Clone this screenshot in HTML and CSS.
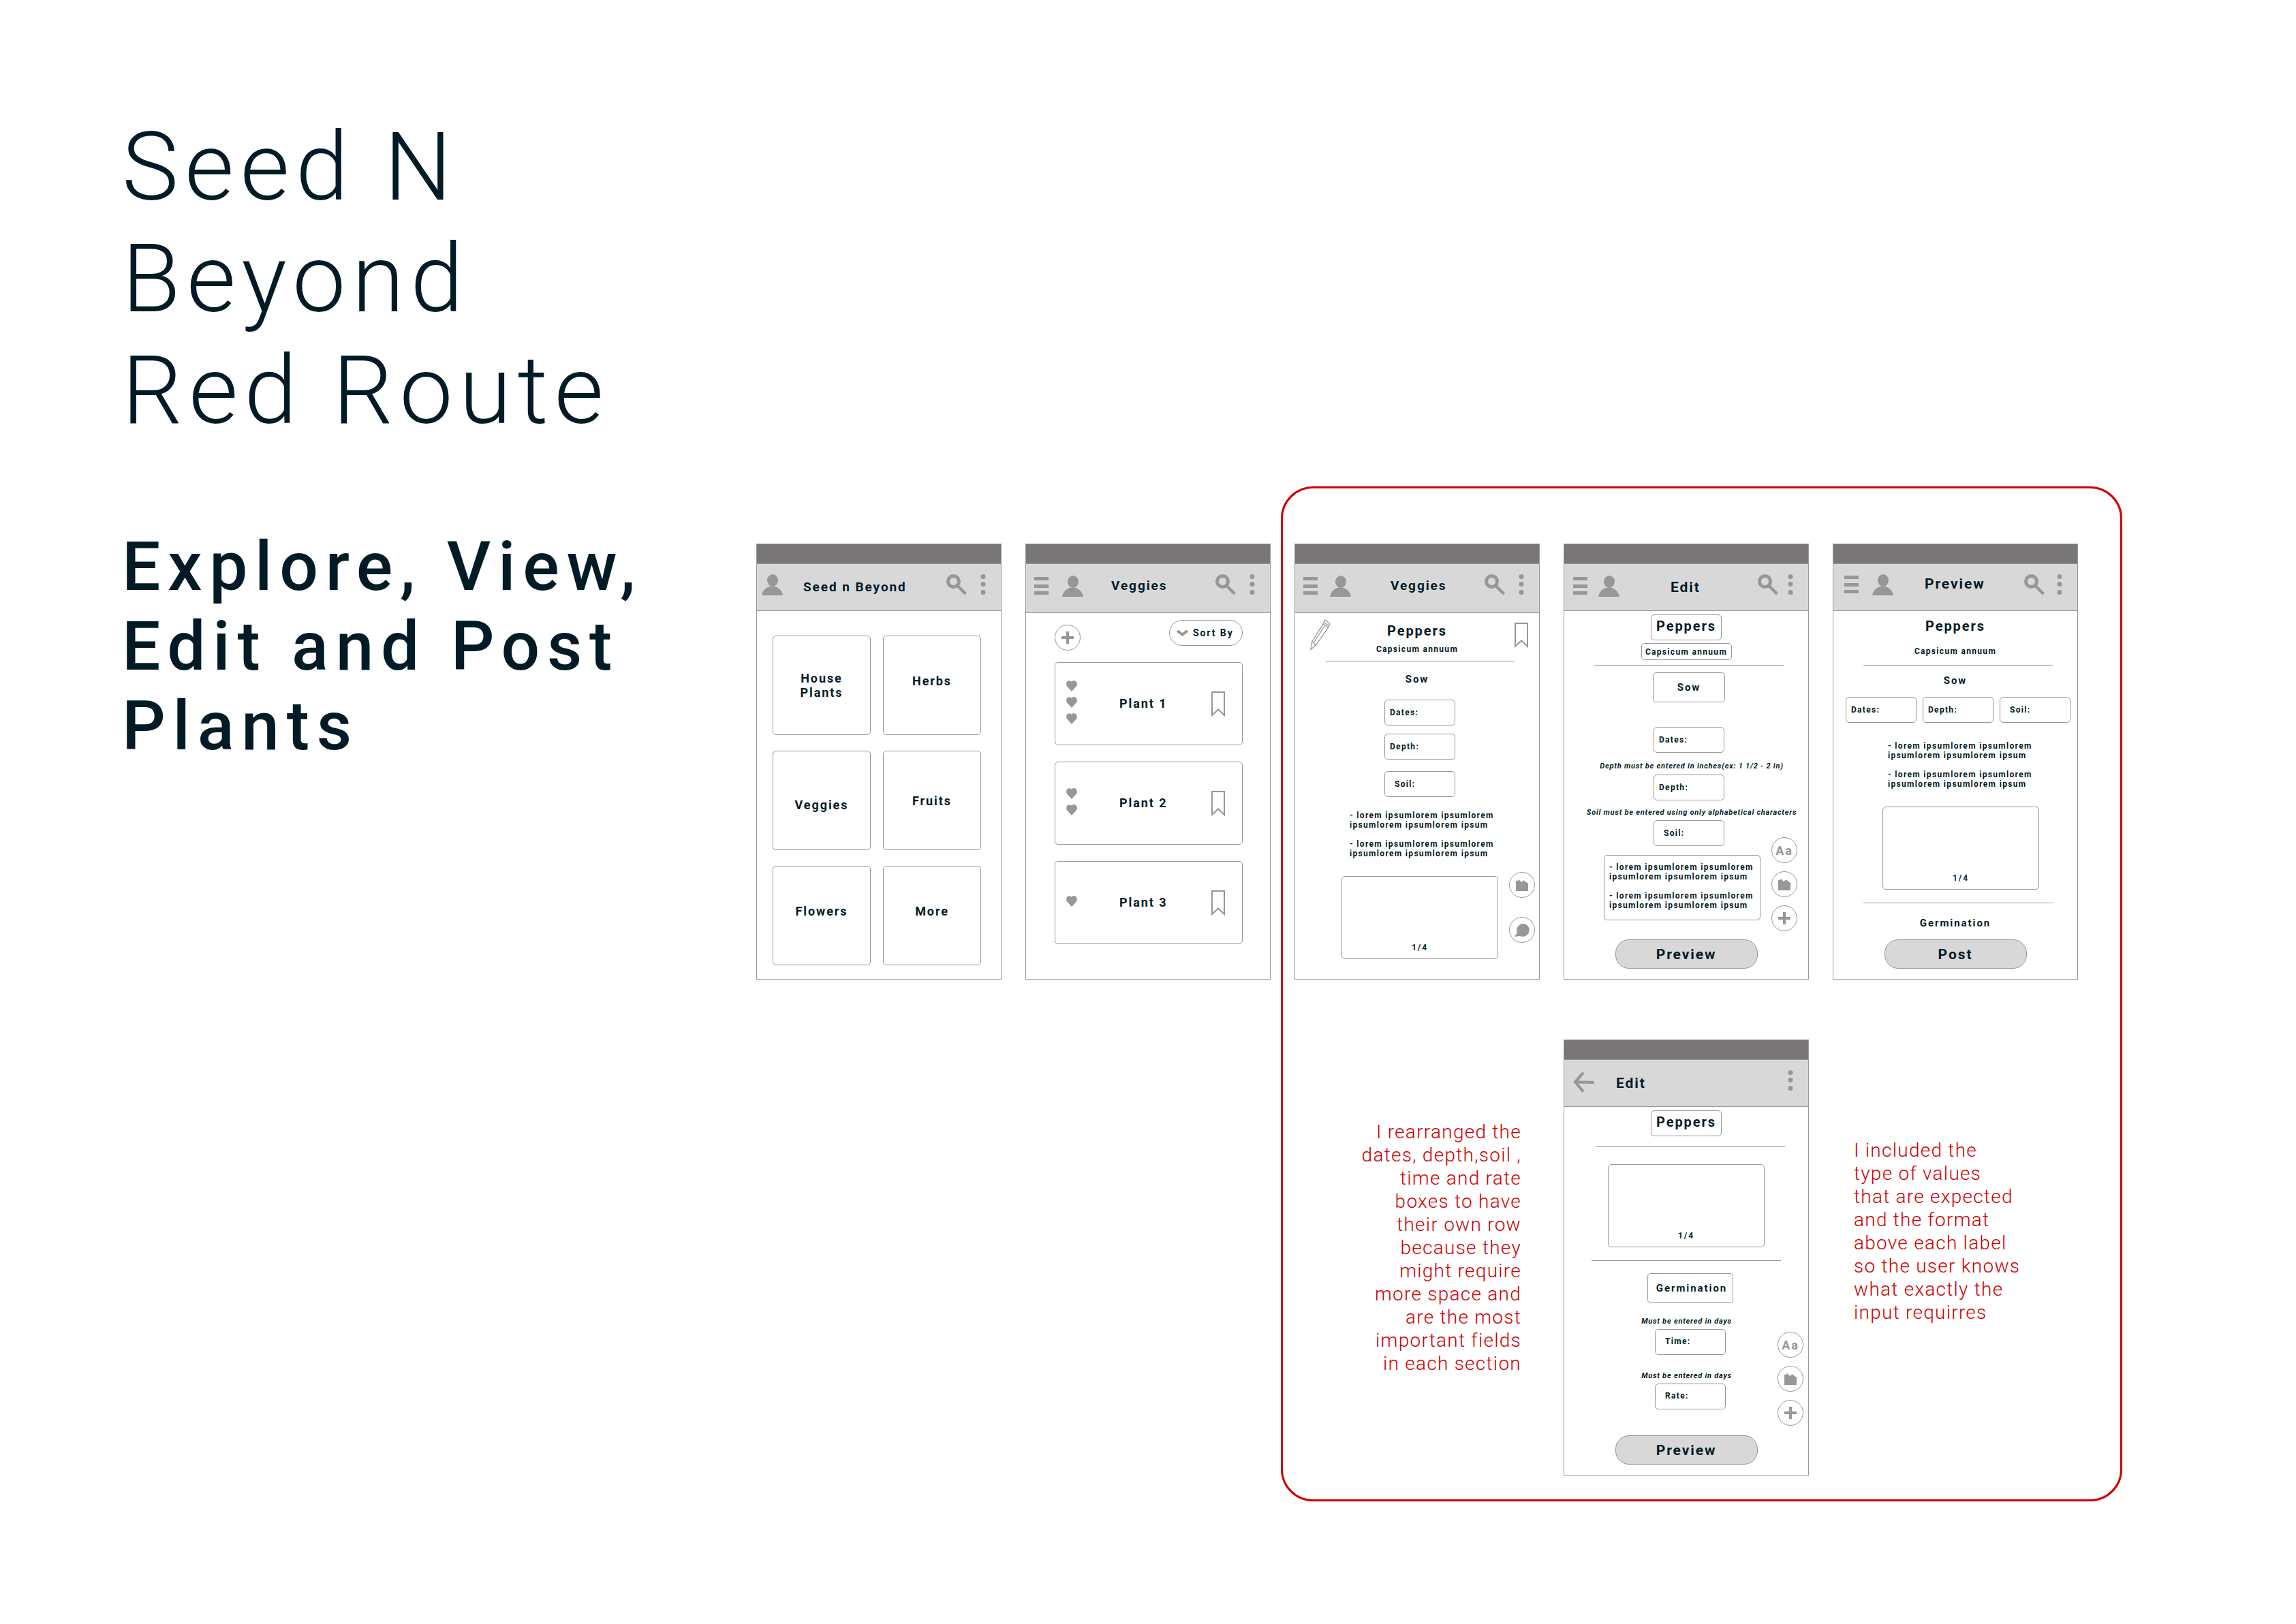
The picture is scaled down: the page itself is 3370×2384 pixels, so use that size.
FILE: index.html
```
<!DOCTYPE html>
<html lang="en">
<head>
<meta charset="utf-8">
<title>Seed N Beyond Red Route</title>
<link rel="stylesheet" href="styles.css">
</head>
<body>
<svg class="sprite" aria-hidden="true">
  <symbol id="user" viewBox="0 0 31 31"><ellipse cx="16" cy="9" rx="8" ry="9"/><path d="M0 31C1 25 6 17.5 15.500 17.500S30 25 31 31z"/></symbol>
  <symbol id="menu" viewBox="0 0 21 31"><path d="M0 2h21v5H0zM0 13h21v5H0zM0 23h21v5H0z"/></symbol>
  <symbol id="search" viewBox="0 0 31 31"><circle cx="10.500" cy="10.500" r="8" fill="none" stroke="currentColor" stroke-width="5"/><path d="M16.500 17L28.500 29" stroke="currentColor" stroke-width="4.500"/></symbol>
  <symbol id="more" viewBox="0 0 8 31"><circle cx="4" cy="3.500" r="3.500"/><circle cx="4" cy="14.500" r="3.500"/><circle cx="4" cy="26.500" r="3.500"/></symbol>
  <symbol id="back" viewBox="0 0 31 31"><path d="M15 1.500L3 15.300L15 29.500M3 15.300L31 16" fill="none" stroke="currentColor" stroke-width="4.200"/></symbol>
  <symbol id="heart" viewBox="0 0 16 16"><path d="M8 16L1.200 8.500C-.5 6.500 0 2 2 1C4.500-.5 7 .3 8 2C9-.2 11.500-.5 14 1C16 2 16.500 6.500 14.800 8.500z"/></symbol>
  <symbol id="bookmark" viewBox="0 0 20 37"><path d="M1 1H19V35L10 26.500L1 35z" fill="none" stroke="currentColor" stroke-width="2"/></symbol>
  <symbol id="plus" viewBox="0 0 18 18"><path d="M0 7h18v4H0zM7 0h4v18H7z"/></symbol>
  <symbol id="chevron" viewBox="0 0 17 11"><path d="M1.200 2L8.500 7.500L15.800 2" fill="none" stroke="currentColor" stroke-width="4"/></symbol>
  <symbol id="pencil" viewBox="0 0 30 46"><path d="M1 44.500L2.500 33.500L19 7L26.500 12L8.500 38zM2.500 33.500L5.500 34L6.500 37L8.500 38M5.500 34L21.500 9.500M19 7L22 1L28.800 6.500L26.500 12M20 4.500L27.500 9.500" fill="none" stroke="currentColor" stroke-width="1.300"/></symbol>
  <symbol id="image" viewBox="0 0 18 17"><path d="M0 2H2.500L4.500 0L8 4.300L11.300 1.300L18 6V17H0z"/></symbol>
  <symbol id="chat" viewBox="0 0 22 19"><path d="M12.500 0A9.500 9.500 0 1 1 8 18L0 19L4 13.500A9.500 9.500 0 0 1 12.500 0z"/></symbol>
</svg>
<main class="board">
  <header class="intro">
    <h1>Seed N<br>Beyond<br>Red Route</h1>
    <h2>Explore, View,<br>Edit and Post<br>Plants</h2>
  </header>

  <div class="flow">
    <article class="phone">
      <div class="status"></div>
      <div class="bar bar-home">
        <svg class="icon-user"><use href="#user"/></svg>
        <h3>Seed n Beyond</h3>
        <svg class="icon-search"><use href="#search"/></svg>
        <svg class="icon-more"><use href="#more"/></svg>
      </div>
      <nav class="tiles">
        <a href="#house">House<br>Plants</a>
        <a href="#herbs" class="raised">Herbs</a>
        <a href="#veggies" class="lowered">Veggies</a>
        <a href="#fruits">Fruits</a>
        <a href="#flowers" class="raised">Flowers</a>
        <a href="#more-plants" class="raised">More</a>
      </nav>
    </article>

    <article class="phone">
      <div class="status"></div>
      <div class="bar bar-tall bar-list">
        <div class="bar-start"><svg class="icon-menu"><use href="#menu"/></svg><svg class="icon-user"><use href="#user"/></svg></div>
        <h3>Veggies</h3>
        <svg class="icon-search"><use href="#search"/></svg>
        <svg class="icon-more"><use href="#more"/></svg>
      </div>
      <div class="listing">
        <div class="tools">
          <button class="round" aria-label="Add"><svg class="icon-plus"><use href="#plus"/></svg></button>
          <button class="sort"><svg class="icon-chevron"><use href="#chevron"/></svg>Sort By</button>
        </div>
        <ul class="plants">
          <li><span class="hearts"><svg><use href="#heart"/></svg><svg><use href="#heart"/></svg><svg><use href="#heart"/></svg></span><a href="#plant1">Plant 1</a><svg class="icon-bookmark"><use href="#bookmark"/></svg></li>
          <li><span class="hearts"><svg><use href="#heart"/></svg><svg><use href="#heart"/></svg></span><a href="#plant2">Plant 2</a><svg class="icon-bookmark"><use href="#bookmark"/></svg></li>
          <li><span class="hearts"><svg><use href="#heart"/></svg></span><a href="#plant3">Plant 3</a><svg class="icon-bookmark"><use href="#bookmark"/></svg></li>
        </ul>
      </div>
    </article>

    <section class="focus">
      <article class="phone">
        <div class="status"></div>
        <div class="bar bar-tall bar-view">
          <div class="bar-start"><svg class="icon-menu"><use href="#menu"/></svg><svg class="icon-user"><use href="#user"/></svg></div>
          <h3>Veggies</h3>
          <svg class="icon-search"><use href="#search"/></svg>
          <svg class="icon-more"><use href="#more"/></svg>
        </div>
        <div class="content view">
          <div class="plant-head">
            <svg class="icon-pencil"><use href="#pencil"/></svg>
            <div class="names"><h4>Peppers</h4><p class="latin">Capsicum annuum</p></div>
            <svg class="icon-bookmark"><use href="#bookmark"/></svg>
          </div>
          <div class="shift">
            <hr>
            <h5>Sow</h5>
            <label class="field">Dates:<input type="text"></label>
            <label class="field">Depth:<input type="text"></label>
            <label class="field indent">Soil:<input type="text"></label>
            <div class="lorem"><p>- lorem ipsumlorem ipsumlorem<br>ipsumlorem ipsumlorem ipsum</p><p>- lorem ipsumlorem ipsumlorem<br>ipsumlorem ipsumlorem ipsum</p></div>
            <div class="photo">1/4</div>
          </div>
        </div>
        <div class="floating floating-view">
          <button class="round" aria-label="Photos"><svg class="icon-image"><use href="#image"/></svg></button>
          <button class="round" aria-label="Comments"><svg class="icon-chat"><use href="#chat"/></svg></button>
        </div>
      </article>

      <article class="phone">
        <div class="status"></div>
        <div class="bar bar-edit">
          <div class="bar-start"><svg class="icon-menu"><use href="#menu"/></svg><svg class="icon-user"><use href="#user"/></svg></div>
          <h3 class="large">Edit</h3>
          <svg class="icon-search"><use href="#search"/></svg>
          <svg class="icon-more"><use href="#more"/></svg>
        </div>
        <div class="content edit">
          <input class="box name" type="text" value="Peppers" aria-label="Name">
          <input class="box latin-box" type="text" value="Capsicum annuum" aria-label="Latin name">
          <div class="shift">
            <hr>
            <input class="box step" type="text" value="Sow" aria-label="Stage">
            <label class="field">Dates:<input type="text"></label>
            <p class="hint">Depth must be entered in inches(ex: 1 1/2 - 2 in)</p>
            <label class="field">Depth:<input type="text"></label>
            <p class="hint">Soil must be entered using only alphabetical characters</p>
            <label class="field indent">Soil:<input type="text"></label>
          </div>
          <textarea class="box" aria-label="Notes" spellcheck="false">- lorem ipsumlorem ipsumlorem
ipsumlorem ipsumlorem ipsum

- lorem ipsumlorem ipsumlorem
ipsumlorem ipsumlorem ipsum</textarea>
          <button class="action">Preview</button>
        </div>
        <div class="floating floating-edit">
          <button class="round">Aa</button>
          <button class="round" aria-label="Photos"><svg class="icon-image"><use href="#image"/></svg></button>
          <button class="round" aria-label="Add"><svg class="icon-plus"><use href="#plus"/></svg></button>
        </div>
      </article>

      <article class="phone">
        <div class="status"></div>
        <div class="bar bar-preview">
          <div class="bar-start"><svg class="icon-menu"><use href="#menu"/></svg><svg class="icon-user"><use href="#user"/></svg></div>
          <h3 class="large">Preview</h3>
          <svg class="icon-search"><use href="#search"/></svg>
          <svg class="icon-more"><use href="#more"/></svg>
        </div>
        <div class="content preview">
          <h4>Peppers</h4>
          <p class="latin">Capsicum annuum</p>
          <div class="shift"><hr></div>
          <h5>Sow</h5>
          <div class="shift">
            <div class="field-row">
              <label class="field">Dates:<input type="text"></label>
              <label class="field">Depth:<input type="text"></label>
              <label class="field indent">Soil:<input type="text"></label>
            </div>
            <div class="lorem"><p>- lorem ipsumlorem ipsumlorem<br>ipsumlorem ipsumlorem ipsum</p><p>- lorem ipsumlorem ipsumlorem<br>ipsumlorem ipsumlorem ipsum</p></div>
            <div class="photo">1/4</div>
            <hr>
          </div>
          <h5>Germination</h5>
          <button class="action">Post</button>
        </div>
      </article>

      <p class="note note-left">I rearranged the<br>dates, depth,soil ,<br>time and rate<br>boxes to have<br>their own row<br>because they<br>might require<br>more space and<br>are the most<br>important fields<br>in each section</p>

      <article class="phone">
        <div class="status"></div>
        <div class="bar bar-back">
          <svg class="icon-back"><use href="#back"/></svg>
          <h3 class="large">Edit</h3>
          <svg class="icon-more"><use href="#more"/></svg>
        </div>
        <div class="content germ">
          <input class="box name" type="text" value="Peppers" aria-label="Name">
          <div class="shift"><hr></div>
          <div class="photo">1/4</div>
          <hr>
          <div class="shift">
            <input class="box step" type="text" value="Germination" aria-label="Stage">
            <p class="hint">Must be entered in days</p>
            <label class="field indent">Time:<input type="text"></label>
            <p class="hint">Must be entered in days</p>
            <label class="field indent">Rate:<input type="text"></label>
          </div>
          <button class="action">Preview</button>
        </div>
        <div class="floating floating-germ">
          <button class="round">Aa</button>
          <button class="round" aria-label="Photos"><svg class="icon-image"><use href="#image"/></svg></button>
          <button class="round" aria-label="Add"><svg class="icon-plus"><use href="#plus"/></svg></button>
        </div>
      </article>

      <p class="note note-right">I included the<br>type of values<br>that are expected<br>and the format<br>above each label<br>so the user knows<br>what exactly the<br>input requirres</p>
    </section>
  </div>
</main>
</body>
</html>
```
FILE: styles.css
```
* { box-sizing: border-box; }

:root {
  --ink: #001b26;
  --line: #979797;
  --bar: #d8d8d8;
  --status: #797677;
  --red: #d00000;
}

body {
  margin: 0;
  background: #fff;
  color: var(--ink);
  font-family: Roboto, "Liberation Sans", sans-serif;
}

h1, h2, h3, h4, h5, p, ul { margin: 0; padding: 0; font-weight: inherit; }
a { color: inherit; text-decoration: none; }
button, input, textarea { font: inherit; color: inherit; letter-spacing: inherit; margin: 0; }
svg { display: block; fill: currentColor; flex: none; color: var(--line); }
.sprite { position: absolute; width: 0; height: 0; }

.board {
  display: flex;
  justify-content: space-between;
  align-items: flex-start;
  padding: 163px 255px 180px 179px;
}

/* Title column */
.intro { display: grid; gap: 118px; }
h1 { font-size: 140px; line-height: 164px; font-weight: 300; letter-spacing: 9px; }
h2 { font-size: 100px; line-height: 117px; font-weight: 500; letter-spacing: 0.107em; }

/* Screens */
.flow { display: flex; align-items: flex-start; margin-top: 551px; }
.flow > .phone { margin-top: 84px; }
.flow > .phone + .phone { margin: 84px 15px 0 35px; }

.focus {
  display: grid;
  grid-template-columns: repeat(3, 360px);
  gap: 88px 35px;
  align-items: start;
  padding: 81px 62px 35px 17px;
  border: 3px solid var(--red);
  border-radius: 47px;
}

.phone {
  position: relative;
  width: 360px;
  height: 640px;
  border: 1px solid var(--line);
  font-weight: 700;
  letter-spacing: 0.12em;
}
.status { height: 29px; background: var(--status); border-bottom: 1px solid var(--line); }

/* Top bar */
.bar {
  display: flex;
  align-items: flex-start;
  height: 69px;
  padding: 15px 22px 0 13px;
  background: var(--bar);
  border-bottom: 1px solid var(--line);
}
.bar-tall { height: 72px; }
.bar-start { display: flex; gap: 18px; padding-top: 2px; }
.bar h3 { flex: 1; font-size: 19px; line-height: 24px; padding: 7px 0 0 0; white-space: nowrap; }
.bar h3.large { font-size: 21px; }
.bar .icon-search { margin-right: 19px; }

.bar-home { padding-left: 7px; }
.bar-home h3 { padding-left: 30px; }
.bar-list { padding-left: 12px; }
.bar-list .bar-start { gap: 20px; }
.bar-list h3 { padding: 5px 0 0 41px; }
.bar-view { padding-left: 12px; }
.bar-view h3 { padding: 5px 0 0 58px; }
.bar-edit .bar-start { gap: 16px; }
.bar-edit h3 { padding-left: 75px; }
.bar-edit .icon-search { margin-right: 13px; }
.bar-preview { padding-left: 16px; }
.bar-preview .bar-start { gap: 20px; padding-top: 0; }
.bar-preview h3 { padding: 2px 0 0 46px; }
.bar-preview .icon-search { margin-right: 17px; }
.bar-back h3 { padding-left: 32px; }
.icon-back { margin-top: 2px; }

.icon-user, .icon-search, .icon-back { width: 31px; height: 31px; }
.icon-menu { width: 21px; height: 31px; }
.icon-more { width: 8px; height: 31px; }
.icon-bookmark { width: 20px; height: 37px; }
.icon-plus { width: 18px; height: 18px; }
.icon-chevron { width: 17px; height: 11px; }
.icon-pencil { width: 30px; height: 46px; }
.icon-image { width: 18px; height: 17px; }
.icon-chat { width: 22px; height: 19px; }

/* Home tiles */
.tiles {
  display: grid;
  grid-template-columns: 144px 144px;
  grid-auto-rows: 146px;
  gap: 23px 18px;
  padding: 36px 23px;
}
.tiles a {
  display: flex;
  align-items: center;
  justify-content: center;
  border: 1px solid var(--line);
  border-radius: 5px;
  font-size: 18px;
  line-height: 21px;
  text-align: center;
}
.tiles .raised { padding-bottom: 14px; }
.tiles .lowered { padding-top: 12px; }

/* Plant list */
.listing { padding: 10px 40px 0 42px; }
.tools { display: flex; justify-content: space-between; height: 45px; }
.tools .round { align-self: flex-end; }
.sort {
  display: flex;
  align-items: center;
  gap: 7px;
  width: 108px;
  height: 38px;
  padding: 0 0 0 10px;
  border: 1px solid var(--line);
  border-radius: 19px;
  background: #fff;
  font-size: 14px;
  white-space: nowrap;
}
.plants { display: grid; gap: 24px; margin-top: 17px; list-style: none; }
.plants li {
  display: flex;
  align-items: center;
  height: 122px;
  padding: 0 25px 0 16px;
  border: 1px solid var(--line);
  border-radius: 5px;
  font-size: 18px;
}
.plants a { flex: 1; padding: 0 0 2px 62px; }
.hearts { display: grid; gap: 8px; padding-bottom: 4px; }
.hearts svg { width: 16px; height: 16px; }

.round {
  display: flex;
  align-items: center;
  justify-content: center;
  width: 38px;
  height: 38px;
  padding: 0;
  border: 1px solid var(--line);
  border-radius: 19px;
  background: #fff;
  color: var(--line);
  font-size: 18px;
}

/* Plant details */
.content, .shift { display: flex; flex-direction: column; align-items: center; }
.shift { width: 100%; padding-left: 8px; }
h4 { font-size: 20px; line-height: 24px; }
h5 { font-size: 15px; line-height: 18px; }
.latin { font-size: 12px; line-height: 14px; letter-spacing: 0.11em; }
hr { width: 278px; height: 1px; margin: 0; border: 0; background: var(--line); }

.field {
  display: flex;
  align-items: center;
  width: 104px;
  height: 38px;
  padding-left: 7px;
  border: 1px solid var(--line);
  border-radius: 5px;
  font-size: 12px;
  line-height: 14px;
  letter-spacing: 0.11em;
}
.field.indent { padding-left: 14px; }
.field input { flex: 1; min-width: 0; padding: 0; border: 0; background: none; outline: 0; }

.box {
  border: 1px solid var(--line);
  border-radius: 5px;
  background: #fff;
  text-align: center;
  padding: 0;
}
.name { width: 104px; height: 38px; padding-bottom: 4px; font-size: 20px; }
.latin-box { width: 133px; height: 25px; font-size: 12px; letter-spacing: 0.11em; }
.step { width: 106px; height: 44px; font-size: 15px; }

.lorem { display: grid; gap: 14px; width: 230px; padding-left: 12px; font-size: 12px; line-height: 14px; letter-spacing: 0.11em; white-space: nowrap; }
.photo {
  display: flex;
  align-items: flex-end;
  justify-content: center;
  width: 230px;
  height: 122px;
  padding-bottom: 9px;
  border: 1px solid var(--line);
  border-radius: 5px;
  font-size: 12px;
  line-height: 14px;
}
.hint { font-size: 11px; line-height: 14px; font-style: italic; letter-spacing: 0.07em; white-space: nowrap; }
textarea.box {
  align-self: flex-start;
  width: 230px;
  height: 96px;
  padding: 10px 0 0 7px;
  font-size: 12px;
  line-height: 14px;
  letter-spacing: 0.11em;
  text-align: left;
  white-space: pre;
  resize: none;
  overflow: hidden;
}
.action {
  width: 209px;
  height: 43px;
  padding: 0;
  border: 1px solid var(--line);
  border-radius: 20px;
  background: var(--bar);
  font-size: 21px;
}

.plant-head {
  display: grid;
  grid-template-columns: 1fr auto 1fr;
  align-items: start;
  width: 100%;
  height: 70px;
  padding: 9px 16px 0 22px;
}
.names { display: grid; gap: 8px; justify-items: center; padding: 5px 6px 0 0; }
.plant-head .icon-bookmark { justify-self: end; margin-top: 5px; }
.view h5 { margin: 17px 8px 21px 0; }
.view .field { margin-bottom: 12px; }
.view .field.indent { margin: 5px 0 20px; }
.view .lorem { margin-bottom: 26px; }

.edit { padding-top: 5px; }
.edit .name { margin-bottom: 4px; }
.edit hr { margin: 7px 0 10px; }
.edit .step { margin-bottom: 36px; }
.edit .hint { margin: 13px 0 5px; padding-left: 8px; }
.edit .hint ~ .hint { margin: 11px 0 4px; }
.edit textarea { margin: 13px 0 28px 58px; }

.preview { padding-top: 10px; }
.preview .latin { margin: 18px 0 13px; }
.preview h5 { margin: 13px 0 15px; }
.field-row { display: flex; gap: 9px; margin-bottom: 27px; }
.preview .lorem { margin-bottom: 26px; }
.preview .photo { margin: 0 0 19px 8px; }
.preview h5:last-of-type { margin: 20px 0 15px; }

.germ { padding-top: 5px; }
.germ .shift { padding-left: 12px; }
.germ .name { margin-bottom: 15px; }
.germ .photo { margin: 25px 0 19px; }
.germ .step { width: 126px; margin: 18px 0 20px; padding-left: 4px; }
.germ .hint { margin-bottom: 4px; padding-right: 11px; }
.germ .field ~ .hint { margin-top: 24px; }
.germ .field { padding-bottom: 3px; }
.germ .action { margin-top: 38px; }

/* Floating buttons */
.floating { position: absolute; display: grid; gap: 12px; }
.floating-view { right: 6px; bottom: 53px; gap: 28px; }
.floating-edit { right: 16px; bottom: 70px; }
.floating-germ { right: 7px; bottom: 72px; }

/* Annotations */
.note { color: var(--red); font-size: 28px; line-height: 34px; font-weight: 300; letter-spacing: 0.045em; white-space: nowrap; }
.note-left { padding: 119px 27px 0 0; text-align: right; }
.note-right { padding: 146px 0 0 31px; }
```
